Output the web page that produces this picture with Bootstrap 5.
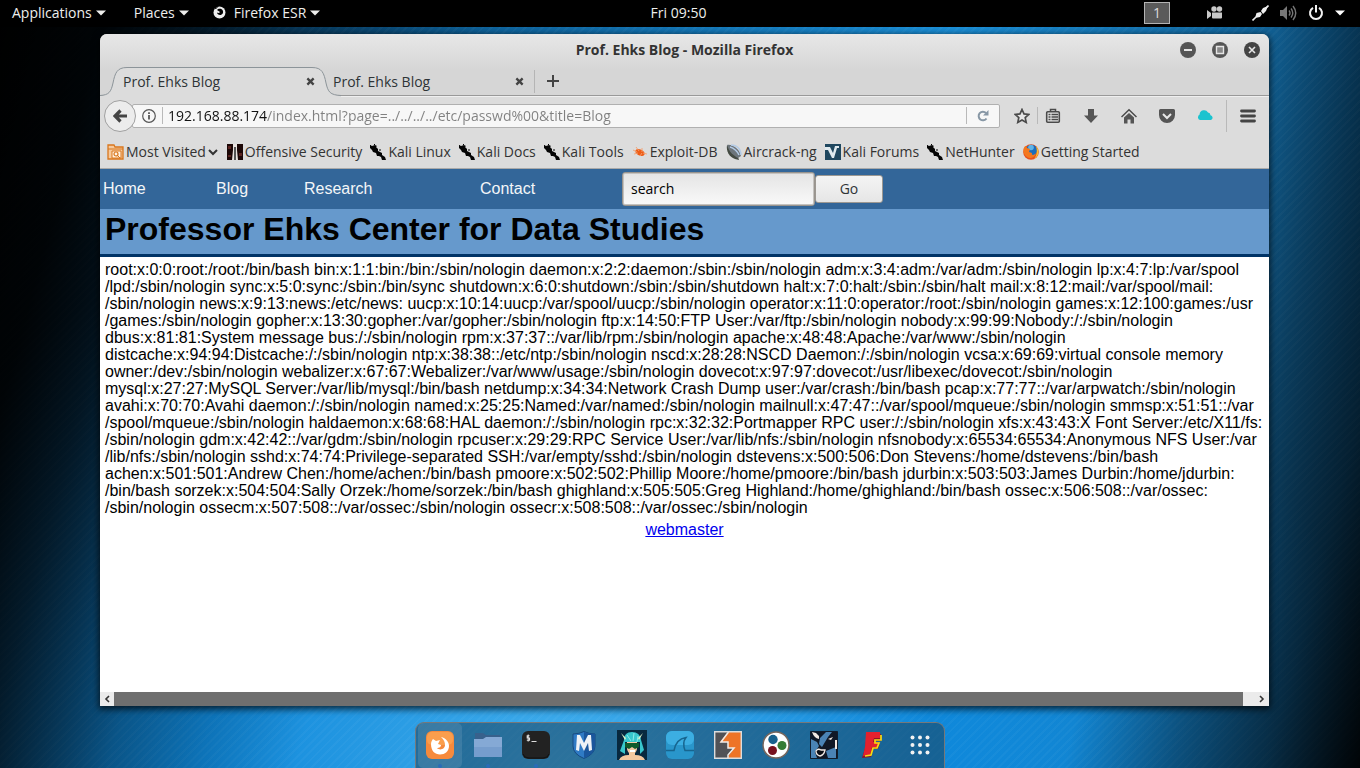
<!DOCTYPE html>
<html lang="en">
<head>
<meta charset="utf-8">
<meta name="viewport" content="width=device-width, initial-scale=1">
<title>Prof. Ehks Blog</title>
<link href="https://cdn.jsdelivr.net/npm/bootstrap@5.3.0/dist/css/bootstrap.min.css" rel="stylesheet">
<style>
body{
  font:14px/20px "Open Sans","Noto Sans",sans-serif;color:#2e3436;
  background:
    linear-gradient(105deg,#000 0,rgba(0,0,0,.93) 7%,rgba(0,0,0,.72) 12%,rgba(0,0,0,.3) 20%,transparent 32%,transparent 81%,rgba(0,0,0,.35) 88%,rgba(0,0,0,.6) 94%,rgba(0,0,0,.95) 100%),
    repeating-linear-gradient(135deg,rgba(255,255,255,.03) 0 2px,transparent 2px 6px),
    radial-gradient(ellipse 60% 75% at 42% 100%,#44b0ee 0,#0f88da 45%,transparent 100%),
    linear-gradient(90deg,#06304f 0,#0c5c93 30%,#1a8fd8 70%,#12649a 93%,#0a4c78 100%);
}
svg{display:block;flex:none}
button{font:inherit}
.plain{background:none;border:0;padding:0;color:inherit;display:flex;align-items:center}
.topbar{height:27px;background:#000;color:#eeeeec;padding:0 15px 2px 12px;display:grid;grid-template-columns:1fr auto 1fr}
.topbar .plain{gap:4px}
.topbar .places{margin-left:28px}
.topbar .app-menu{margin-left:24px}
.topbar .recorder{margin-left:37px}
.topbar .net{margin-left:29px}
.topbar .vol,.topbar .power,.topbar .sys{margin-left:11px}
.workspace{width:26px;height:22px;background:#5a5a5a;border:1px solid #b4b4b4;justify-content:center;color:#ddd}
.browser{margin:7px 91px 16px 100px;border-radius:7px 7px 0 0;background:#dcdcdc;box-shadow:0 2px 7px 1px rgba(0,0,0,.75);overflow:hidden}
.chrome-top{background:linear-gradient(#e7e7e7,#d6d6d6 36px)}
.titlebar{height:33px;display:grid;grid-template-columns:1fr auto 1fr;align-items:center;padding:0 9px 2px}
.win-title{font-weight:700;color:#333}
.tabs{height:29px;border-bottom:1px solid #999}
.tab-on{width:232px;height:29px;position:relative;margin-right:-9px}
.tab-on>svg{position:absolute;left:0;top:0}
.tab-on .tab-row{position:relative;padding:0 17px 0 23px;height:29px}
.tab-off{width:212px;padding:0 10px;height:23px;margin-top:3px;border-right:1px solid #b5b5b5}
.tab-row button{color:#444}
.toolbar{height:40px;padding:0 0 2px 4px;border-top:1px solid #efefef}
.back{width:32px;height:32px;border:1px solid #a0a0a0;border-radius:50%;background:#ececec;justify-content:center;z-index:1}
.urlbar{height:24px;margin-left:-4px;padding-left:9px;background:#f7f7f7;border:1px solid #b0b0b0;border-radius:2px}
.urlbar input{border:0;outline:0;padding:0;min-width:0;height:22px;
  background:linear-gradient(90deg,#111 99px,#808080 99px);-webkit-background-clip:text;background-clip:text;color:transparent}
.urlbar .ident-line{margin:0 5px 0 6px}
.urlbar .reload{margin:0 10px}
.vline{width:1px;height:17px;background:#b9b9b9;flex:none}
.tools{width:269px;padding-left:14px}
.tools .star-line{margin:0 7px}
.tools .spaced{margin-left:22px}
.tools .menu-line{height:32px;margin:0 13px}
.bookmarks{height:33px;padding-left:7px;gap:8px;border-bottom:1px solid #aaa}
.bookmarks a{color:#333;text-decoration:none;gap:2px;display:flex;align-items:center;white-space:nowrap}
.webpage{background:#fff;min-height:523px;color:#000;font:16px/17px "Liberation Sans",Arial,sans-serif}
.site-nav{height:40px;background:#336699;padding-left:3px}
.site-nav a{color:#f4f6f8;text-decoration:none;width:113px;padding-bottom:2px}
.site-nav a.w-blog{width:88px}
.site-nav a.w-research{width:176px}
.site-nav a.w-contact{width:142px}
.site-nav input{width:193px;height:34px;border:1px solid #99948e;box-shadow:inset 0 0 0 1px #c4c2bf;border-radius:3px;padding:0 8px 2px;background:linear-gradient(#e4e4e4,#f9f9f9);font:14px "Open Sans",sans-serif;color:#000}
.site-nav button{width:68px;height:28px;border:1px solid #9c9892;border-radius:3px;padding:0 0 2px;background:linear-gradient(#f4f4f4,#e6e6e6);font:14px "Open Sans",sans-serif;color:#2e3436}
.site-head{height:48px;background:#6699cc;border-bottom:3px solid #003366;padding:2px 5px;margin:0;font-size:32px;line-height:37px;font-weight:700}
.dump{margin:0;padding:4px 0 5px 5px}
.webmaster{color:#00e}
.hscroll{height:14px;background:#ebebeb}
.hscroll .plain{width:14px;justify-content:center}
.thumb{background:#6f6f6f;margin-right:12px}
.dock{height:46px;border:1px solid #77787a;border-bottom:0;border-radius:9px 9px 0 0;background:rgba(28,70,98,.58)}
.dock .plain{width:48px;height:45px;padding-bottom:2px;justify-content:center;position:relative}
.dock .plain.on{width:44px;margin:0 2px;background:rgba(255,255,255,.1);border-radius:5px}
.dock .run::after{content:"";position:absolute;bottom:0;left:50%;margin-left:-2px;width:4px;height:4px;border-radius:50%;background:#2a6cb8}
</style>
</head>
<body class="d-flex flex-column min-vh-100">
<svg class="d-none" aria-hidden="true">
  <symbol id="caret" viewBox="0 0 10 6"><path d="M0 .5h10L5 5.500z" fill="currentColor"/></symbol>
  <symbol id="cross" viewBox="0 0 10 10"><path d="M1.500 1.500l7 7M8.500 1.500l-7 7" stroke="#444" stroke-width="2.600"/></symbol>
  <symbol id="dragon" viewBox="0 0 16 16"><path d="M0 1l2 1 3-1 2 1-1 1 2 2 0 2 2 1 2 1 0 2 3 2 1 3-1 1-3-1-1-3-2-1-2 0-1-3-3-1-1-2-2-2z" fill="#050505"/><path d="M0 1l1 3M9 6l2 0M4 1l1-1" stroke="#050505" fill="none"/></symbol>
</svg>

<header class="topbar align-items-center">
  <div class="d-flex">
    <button class="plain" type="button">Applications <svg width="10" height="6"><use href="#caret"/></svg></button>
    <button class="plain places" type="button">Places <svg width="10" height="6"><use href="#caret"/></svg></button>
    <button class="plain app-menu" type="button">
      <svg width="13" height="13" viewBox="0 0 13 13"><circle cx="6.500" cy="6.500" r="6" fill="#eee"/><path d="M4 4c1-1.500 4-2 5.500 0 1.500 2.500 0 5-2.500 5-1.500 0-3-1-3-2.500 1 .8 2.500.6 3-.5L5.500 5z" fill="#000"/><path d="M1 3l2 0 3-3z" fill="#000"/></svg>
      <span class="ms-1">Firefox ESR</span> <svg width="10" height="6"><use href="#caret"/></svg></button>
  </div>
  <span>Fri 09:50</span>
  <div class="d-flex justify-content-end align-items-center">
    <button class="plain workspace" type="button">1</button>
    <button class="plain recorder" type="button" aria-label="Screen recording"><svg width="16" height="13" viewBox="0 0 16 13" fill="#c8c8c8"><circle cx="7" cy="3" r="2.700"/><circle cx="12.500" cy="3" r="2.700"/><path d="M5 6.500h10v5a1 1 0 0 1-1 1H6a1 1 0 0 1-1-1zM0 4l4 3v3l-4 3z"/></svg></button>
    <button class="plain net" type="button" aria-label="Network"><svg width="17" height="16" viewBox="0 0 17 16"><path d="M.5 15.500L4 12M16.500.5L13 4" stroke="#eee" stroke-width="1.600"/><path d="M3 13l1.500-5 4-1L10 9l-2 3zM9 6l2-3 5-2-2 5-3 3z" fill="#eee"/></svg></button>
    <button class="plain vol" type="button" aria-label="Volume"><svg width="17" height="16" viewBox="0 0 17 16"><path d="M0 5h3l4-4v14l-4-4H0z" fill="#777"/><path d="M9 5.500q2 2.500 0 5M11 3.500q3.500 4.500 0 9M13 1q5.500 7 0 14" fill="none" stroke="#777" stroke-width="1.400"/></svg></button>
    <button class="plain power" type="button" aria-label="Power"><svg width="16" height="16" viewBox="0 0 16 16"><path d="M5 2.800a6 6 0 1 0 6 0M8 0v7.500" fill="none" stroke="#f2f2f2" stroke-width="2"/></svg></button>
    <button class="plain sys" type="button" aria-label="System menu"><svg width="10" height="6" class="text-white"><use href="#caret"/></svg></button>
  </div>
</header>

<main class="browser">
  <div class="chrome-top">
    <div class="titlebar">
      <span></span>
      <span class="win-title">Prof. Ehks Blog - Mozilla Firefox</span>
      <div class="d-flex justify-content-end gap-3">
        <button class="plain" type="button" aria-label="Minimize"><svg width="16" height="16"><circle cx="8" cy="8" r="8" fill="#555"/><path d="M4 8h8" stroke="#e6e6e6" stroke-width="2"/></svg></button>
        <button class="plain" type="button" aria-label="Maximize"><svg width="16" height="16"><circle cx="8" cy="8" r="8" fill="#555"/><path d="M4.500 4.500h7v7h-7z" fill="#888" stroke="#e6e6e6" stroke-width="1.400"/></svg></button>
        <button class="plain" type="button" aria-label="Close"><svg width="16" height="16"><circle cx="8" cy="8" r="8" fill="#444"/><path d="M5 5l6 6M11 5l-6 6" stroke="#e6e6e6" stroke-width="1.600"/></svg></button>
      </div>
    </div>
    <div class="tabs d-flex">
      <div class="tab-on">
        <svg width="241" height="30" viewBox="0 0 241 30"><path d="M0 28.500C9 28 11 25 13 16 15 6 17 .5 27 .5H212C222 .5 224 6 226 16 228 25 230 28 241 28.500V30H0z" fill="#dcdcdc"/><path d="M0 28.500C9 28 11 25 13 16 15 6 17 .5 27 .5H212C222 .5 224 6 226 16 228 25 230 28 241 28.500" fill="none" stroke="#8c9499"/></svg>
        <div class="tab-row d-flex align-items-center justify-content-between"><span>Prof. Ehks Blog</span><button class="plain" type="button" aria-label="Close tab"><svg width="9" height="9"><use href="#cross"/></svg></button></div>
      </div>
      <div class="tab-off tab-row d-flex align-items-center justify-content-between"><span>Prof. Ehks Blog</span><button class="plain" type="button" aria-label="Close tab"><svg width="9" height="9"><use href="#cross"/></svg></button></div>
      <button class="plain ms-2 ps-1" type="button" aria-label="New tab"><svg width="12" height="12"><path d="M6 0v12M0 6h12" stroke="#444" stroke-width="2"/></svg></button>
    </div>
  </div>
  <div class="toolbar d-flex align-items-center">
    <button class="plain back" type="button" aria-label="Back"><svg width="14" height="14" viewBox="0 0 14 14"><path d="M7.500 1.500L2 7l5.500 5.500M2.500 7H14" stroke="#444" stroke-width="3.200" fill="none"/></svg></button>
    <div class="urlbar d-flex align-items-center flex-fill">
      <svg width="14" height="14" viewBox="0 0 14 14"><circle cx="7" cy="7" r="6.300" fill="none" stroke="#555" stroke-width="1.200"/><path d="M7 6v4.500M7 3.200v1.700" stroke="#555" stroke-width="1.800"/></svg>
      <span class="vline ident-line"></span>
      <input class="flex-fill" type="text" aria-label="Address" value="192.168.88.174/index.html?page=../../../../etc/passwd%00&amp;title=Blog">
      <span class="vline"></span>
      <button class="plain reload" type="button" aria-label="Reload"><svg width="12" height="12" viewBox="0 0 12 12"><path d="M9.500 8.500A4.300 4.300 0 1 1 9 3" fill="none" stroke="#8797a5" stroke-width="2"/><path d="M11.500 0v5.500H6z" fill="#8797a5"/></svg></button>
    </div>
    <div class="tools d-flex align-items-center">
      <button class="plain" type="button" aria-label="Bookmark this page"><svg width="16" height="16" viewBox="0 0 16 16"><path d="M8 1.500l2 4.400 4.800.5-3.600 3.200 1 4.800L8 12l-4.200 2.400 1-4.800L1.200 6.400 6 5.900z" fill="#e6e6e6" stroke="#4a4a4a" stroke-width="1.700"/></svg></button>
      <span class="vline star-line"></span>
      <button class="plain" type="button" aria-label="Bookmarks list"><svg width="16" height="16" viewBox="0 0 16 16"><path d="M5.500 3V1.500h5V3" fill="none" stroke="#4a4a4a" stroke-width="1.500"/><rect x="1.700" y="3.700" width="12.600" height="10.600" rx="1" fill="#e4e4e4" stroke="#4a4a4a" stroke-width="1.600"/><path d="M3.500 6.500h2M3.500 9h2M3.500 11.500h2M6.500 6.500H13M6.500 9H13M6.500 11.500H13" stroke="#4a4a4a" stroke-width="1.300"/></svg></button>
      <button class="plain spaced" type="button" aria-label="Downloads"><svg width="16" height="16" viewBox="0 0 16 16"><path d="M5 1h6v6.500h4L8 15 1 7.500h4z" fill="#555"/></svg></button>
      <button class="plain spaced" type="button" aria-label="Home"><svg width="16" height="16" viewBox="0 0 16 16"><path d="M.5 9L8 1.800 15.500 9" fill="none" stroke="#4a4a4a" stroke-width="1.500"/><path d="M3 9.500l5-4.600 5 4.600v6H9.500v-4h-3v4H3z" fill="#555"/></svg></button>
      <button class="plain spaced" type="button" aria-label="Pocket"><svg width="16" height="16" viewBox="0 0 16 16"><path d="M1.500 1h13A1.500 1.500 0 0 1 16 2.500V7a8 8 0 0 1-16 0V2.500A1.500 1.500 0 0 1 1.500 1z" fill="#555"/><path d="M4 6l4 4 4-4" fill="none" stroke="#e8e8e8" stroke-width="2"/></svg></button>
      <button class="plain spaced" type="button" aria-label="Cloud"><svg width="16" height="14" viewBox="0 0 16 14"><path d="M3 11a3 3 0 0 1-.4-5.500A4.500 4.500 0 0 1 11 3.500a3 3 0 0 1 2.500 2.700A2.500 2.500 0 0 1 14 11z" fill="#1bc3cf"/></svg></button>
      <span class="vline menu-line"></span>
      <button class="plain" type="button" aria-label="Menu"><svg width="16" height="14"><path d="M1.500 2h13M1.500 7h13M1.500 12h13" stroke="#444" stroke-width="2.800" stroke-linecap="round"/></svg></button>
    </div>
  </div>
  <nav class="bookmarks d-flex align-items-center">
    <a href="#"><svg width="17" height="16" viewBox="0 0 17 16"><path d="M1 3V1h6l1 2h8v12H1z" fill="#f6c99c" stroke="#d9761c" stroke-width="1.300"/><path d="M1 5h15" stroke="#d9761c"/><path d="M5 7h9v7H5z" fill="#fff3e4" stroke="#d9761c"/><circle cx="9" cy="10" r="2" fill="none" stroke="#d9761c" stroke-width="1.200"/><path d="M10.500 11.500L13 14" stroke="#d9761c"/></svg>Most Visited<svg width="11" height="7"><path d="M1 1l4 4 4-4" fill="none" stroke="#333" stroke-width="2"/></svg></a>
    <a href="#"><svg width="16" height="16"><path d="M0 0h16v16H0z" fill="#1c0707"/><path d="M1 2h3v3H1zM12 9h3v3h-3zM1 11h3v2H1z" fill="#5a2320"/><path d="M6 0h4v6l1 10H9V3H7v13H5L6 6z" fill="#e8e3e0"/><path d="M7 3h2v13H7z" fill="#555"/></svg>Offensive Security</a>
    <a href="#"><svg width="16" height="16"><use href="#dragon"/></svg>Kali Linux</a>
    <a href="#"><svg width="16" height="16"><use href="#dragon"/></svg>Kali Docs</a>
    <a href="#"><svg width="16" height="16"><use href="#dragon"/></svg>Kali Tools</a>
    <a href="#"><svg width="16" height="16" viewBox="0 0 16 16"><ellipse cx="8" cy="8.500" rx="5" ry="3" fill="#ee5d17" transform="rotate(25 8 8.500)"/><path d="M1 6l4 2M4 3l3 4M10 4l0 4M2 10l4-1M8 12l2-3M15 10l-4-1" stroke="#f4a070" stroke-width=".9"/></svg>Exploit-DB</a>
    <a href="#"><svg width="16" height="16" viewBox="0 0 16 16"><path d="M1 1c-1 6 2 12 8 14l4 1-1-3z" fill="#444a42"/><path d="M1 1c5-1 12 3 14 11l-3 2C8 12 3 8 1 1z" fill="#6d757b"/><path d="M5 1c6 0 10 4 10 10M4 3c4 1 8 5 9 8" stroke="#b4cbe6" stroke-width="1.500" fill="none"/></svg>Aircrack-ng</a>
    <a href="#"><svg width="16" height="16"><path d="M0 0h16v16H0z" fill="#1f475f"/><path d="M0 3h5l3 6 2-7h4v2l-2 0-3 10H7L3 6H0z" fill="#dfe9ee"/></svg>Kali Forums</a>
    <a href="#"><svg width="16" height="16"><use href="#dragon"/></svg>NetHunter</a>
    <a href="#"><svg width="16" height="16" viewBox="0 0 16 16"><circle cx="8" cy="8" r="7.800" fill="#e8501c"/><circle cx="8.500" cy="6.300" r="5.600" fill="#1d6dbb"/><circle cx="8" cy="3.500" r="2.800" fill="#5fb4e8"/><path d="M13 2c4 5 3 10-2 13 2-3 4-6 2-13z" fill="#fbc02d"/><path d="M.5 5C1 3 2 2 3 2l1 2 3 1-1 3 3 1c-1 3 3 2 4 0-1 5-6 6-9 4S0 8 .5 5z" fill="#f4781f"/></svg>Getting Started</a>
  </nav>

  <section class="webpage d-flex flex-column">
    <form class="site-nav d-flex align-items-center" onsubmit="return false">
      <a href="#">Home</a><a class="w-blog" href="#">Blog</a><a class="w-research" href="#">Research</a><a class="w-contact" href="#">Contact</a>
      <input type="text" aria-label="Search" value="search"><button type="submit">Go</button>
    </form>
    <h1 class="site-head">Professor Ehks Center for Data Studies</h1>
    <p class="dump">root:x:0:0:root:/root:/bin/bash bin:x:1:1:bin:/bin:/sbin/nologin daemon:x:2:2:daemon:/sbin:/sbin/nologin adm:x:3:4:adm:/var/adm:/sbin/nologin lp:x:4:7:lp:/var/spool<br>
/lpd:/sbin/nologin sync:x:5:0:sync:/sbin:/bin/sync shutdown:x:6:0:shutdown:/sbin:/sbin/shutdown halt:x:7:0:halt:/sbin:/sbin/halt mail:x:8:12:mail:/var/spool/mail:<br>
/sbin/nologin news:x:9:13:news:/etc/news: uucp:x:10:14:uucp:/var/spool/uucp:/sbin/nologin operator:x:11:0:operator:/root:/sbin/nologin games:x:12:100:games:/usr<br>
/games:/sbin/nologin gopher:x:13:30:gopher:/var/gopher:/sbin/nologin ftp:x:14:50:FTP User:/var/ftp:/sbin/nologin nobody:x:99:99:Nobody:/:/sbin/nologin<br>
dbus:x:81:81:System message bus:/:/sbin/nologin rpm:x:37:37::/var/lib/rpm:/sbin/nologin apache:x:48:48:Apache:/var/www:/sbin/nologin<br>
distcache:x:94:94:Distcache:/:/sbin/nologin ntp:x:38:38::/etc/ntp:/sbin/nologin nscd:x:28:28:NSCD Daemon:/:/sbin/nologin vcsa:x:69:69:virtual console memory<br>
owner:/dev:/sbin/nologin webalizer:x:67:67:Webalizer:/var/www/usage:/sbin/nologin dovecot:x:97:97:dovecot:/usr/libexec/dovecot:/sbin/nologin<br>
mysql:x:27:27:MySQL Server:/var/lib/mysql:/bin/bash netdump:x:34:34:Network Crash Dump user:/var/crash:/bin/bash pcap:x:77:77::/var/arpwatch:/sbin/nologin<br>
avahi:x:70:70:Avahi daemon:/:/sbin/nologin named:x:25:25:Named:/var/named:/sbin/nologin mailnull:x:47:47::/var/spool/mqueue:/sbin/nologin smmsp:x:51:51::/var<br>
/spool/mqueue:/sbin/nologin haldaemon:x:68:68:HAL daemon:/:/sbin/nologin rpc:x:32:32:Portmapper RPC user:/:/sbin/nologin xfs:x:43:43:X Font Server:/etc/X11/fs:<br>
/sbin/nologin gdm:x:42:42::/var/gdm:/sbin/nologin rpcuser:x:29:29:RPC Service User:/var/lib/nfs:/sbin/nologin nfsnobody:x:65534:65534:Anonymous NFS User:/var<br>
/lib/nfs:/sbin/nologin sshd:x:74:74:Privilege-separated SSH:/var/empty/sshd:/sbin/nologin dstevens:x:500:506:Don Stevens:/home/dstevens:/bin/bash<br>
achen:x:501:501:Andrew Chen:/home/achen:/bin/bash pmoore:x:502:502:Phillip Moore:/home/pmoore:/bin/bash jdurbin:x:503:503:James Durbin:/home/jdurbin:<br>
/bin/bash sorzek:x:504:504:Sally Orzek:/home/sorzek:/bin/bash ghighland:x:505:505:Greg Highland:/home/ghighland:/bin/bash ossec:x:506:508::/var/ossec:<br>
/sbin/nologin ossecm:x:507:508::/var/ossec:/sbin/nologin ossecr:x:508:508::/var/ossec:/sbin/nologin</p>
    <div class="text-center"><a class="webmaster" href="#">webmaster</a></div>
  </section>
  <div class="hscroll d-flex">
    <button class="plain" type="button" aria-label="Scroll left"><svg width="6" height="8"><path d="M5 1L2 4l3 3" fill="none" stroke="#333" stroke-width="1.600"/></svg></button>
    <div class="thumb flex-fill"></div>
    <button class="plain" type="button" aria-label="Scroll right"><svg width="6" height="8"><path d="M1 1l3 3-3 3" fill="none" stroke="#333" stroke-width="1.600"/></svg></button>
  </div>
</main>

<footer class="d-flex justify-content-center mt-auto">
  <nav class="dock d-flex" aria-label="Dock">
    <button class="plain on run" type="button" aria-label="Firefox"><svg width="28" height="28"><rect width="28" height="28" rx="6" fill="#f68a3c"/><rect x="1" y="1" width="26" height="13" rx="5" fill="#fa9e4d"/><path d="M5 13c0-2 1-4 2-5l3 2 4-1-2 4 3 1c0 3-4 3-4 3 3 3 8 1 8-3 0-3-1-5-4-8 5 1 8 5 8 9 0 5-4 8.500-9 8.500S5 20 5 13z" fill="#fff"/></svg></button>
    <button class="plain run" type="button" aria-label="Files"><svg width="28" height="26"><path d="M1 1h8l3 2h14v6H1z" fill="#38618c"/><path d="M0 7h9l3-2h16v20H0z" fill="#85a9d5"/><path d="M0 15h28v10H0z" fill="#769dcd"/></svg></button>
    <button class="plain run" type="button" aria-label="Terminal"><svg width="28" height="28"><rect width="28" height="28" rx="6" fill="#222"/><path d="M1 23q1 4 6 4h14q5 0 6-4" stroke="#111" fill="none"/><path d="M7.500 4.800H5.200v2.200h2.300v2.300H4.800M6.200 3.500v7M9.500 10.500h5" stroke="#ddd" stroke-width="1.100" fill="none"/></svg></button>
    <button class="plain" type="button" aria-label="Metasploit"><svg width="24" height="28"><path d="M1 3q6 0 11-2.500Q17 3 23 3v12q0 8-11 12.500Q1 23 1 15z" fill="#2f7ac4" stroke="#174a80"/><path d="M12 1q5 2 11 2v12q0 8-11 12z" fill="#1a569c"/><path d="M4 19L5 4l3 0 4 8 4-8h3l1 15-3 1-1-8-4 8-4-8-1 8z" fill="#eef2f6"/></svg></button>
    <button class="plain" type="button" aria-label="Armitage"><svg width="30" height="30"><path d="M0 0h30v30H0z" fill="#08283e"/><path d="M7 10q0-8 8-8t9 8l3 10-4 4V12H8v12l-5-3z" fill="#38c6cc"/><path d="M10 12h10v7q-1 5-5 5t-5-5z" fill="#f5caa5"/><path d="M2 30q2-5 10-5v-3h6v3q8 0 10 5z" fill="#f4c79e"/><path d="M8 13h14v4l-4 2-3-2-3 2-4-2z" fill="#0f5a2b"/><path d="M4 3l5 5-1 2zM26 3l-5 5 1 2z" fill="#dff3c8"/><path d="M13 20h5v2h-5z" fill="#fff"/><path d="M10 5l4 6M17 3l-1 8M21 6l-1 6" stroke="#8cecea"/></svg></button>
    <button class="plain" type="button" aria-label="Wireshark"><svg width="28" height="28"><rect width="28" height="28" rx="6" fill="#2996cb"/><rect width="28" height="14" rx="6" fill="#3caee2"/><path d="M0 19.500h8Q10 8 20 6.500q-4 5-1 13h9" fill="none" stroke="#17658f" stroke-width="1.500"/></svg></button>
    <button class="plain" type="button" aria-label="Burp Suite"><svg width="28" height="28"><path d="M.7.700h26.600v26.600H.7z" fill="#ee7427"/><path d="M.7.700H14L6 11h8v6h6l-7 10.300H.7z" fill="#515256"/><path d="M14.500 1L7 11h7v6h6l-6 7v3" fill="none" stroke="#f1ece7" stroke-width="1.500"/><path d="M.7.700h26.600v26.600H.7z" fill="none" stroke="#ddd" stroke-width="1.400"/></svg></button>
    <button class="plain" type="button" aria-label="Maltego"><svg width="28" height="28"><circle cx="14" cy="14" r="13" fill="#fff" stroke="#77665c" stroke-width="1.500"/><circle cx="11" cy="8.500" r="4.700" fill="#17618d"/><circle cx="20" cy="14.500" r="4.500" fill="#367c35"/><circle cx="10.500" cy="19.500" r="4.500" fill="#77111e"/></svg></button>
    <button class="plain" type="button" aria-label="BeEF"><svg width="28" height="28"><path d="M.5.500h27v27H.5z" fill="#101826" stroke="#101c2c"/><path d="M1 8l6 3 2 4-4 6 2 6H1zM10 7l6-6h6l-4 5-3 5-3 5-3-3zM16 20l10-4v11h-8z" fill="#4a83b5"/><path d="M2 1q2 6 7 7l0-3-3-3zM18 8l5-2-2 3M25 9h2v9h-2z" fill="#f2e9e2"/><path d="M6 20q2-3 5-1l4 0q-1 5-5 6-4-1-4-5z" fill="#0a0d14" stroke="#efe8e4" stroke-width="1.300"/></svg></button>
    <button class="plain" type="button" aria-label="Faraday"><svg width="22" height="28"><path d="M6 3h14v7h-5v2h4l-2 6h-5l-2 8-9 1 3-10z" fill="#8b1527"/><path d="M5 1h14v6h-6l-1 4h6l-2 5h-5l-2 8-7 1 2-9z" fill="#e3212e"/><path d="M20 4v5h-6v3h4l-2 5h-4l-2 7-6 1" fill="none" stroke="#f7dc12" stroke-width="1.700"/></svg></button>
    <button class="plain" type="button" aria-label="Show applications"><svg width="20" height="20" fill="#f2f2f2"><g id="r"><circle cx="2.500" cy="2.500" r="2"/><circle cx="10" cy="2.500" r="2"/><circle cx="17.500" cy="2.500" r="2"/></g><use href="#r" y="7.500"/><use href="#r" y="15"/></svg></button>
  </nav>
</footer>
<script src="https://cdn.jsdelivr.net/npm/bootstrap@5.3.0/dist/js/bootstrap.bundle.min.js"></script>
</body>
</html>
